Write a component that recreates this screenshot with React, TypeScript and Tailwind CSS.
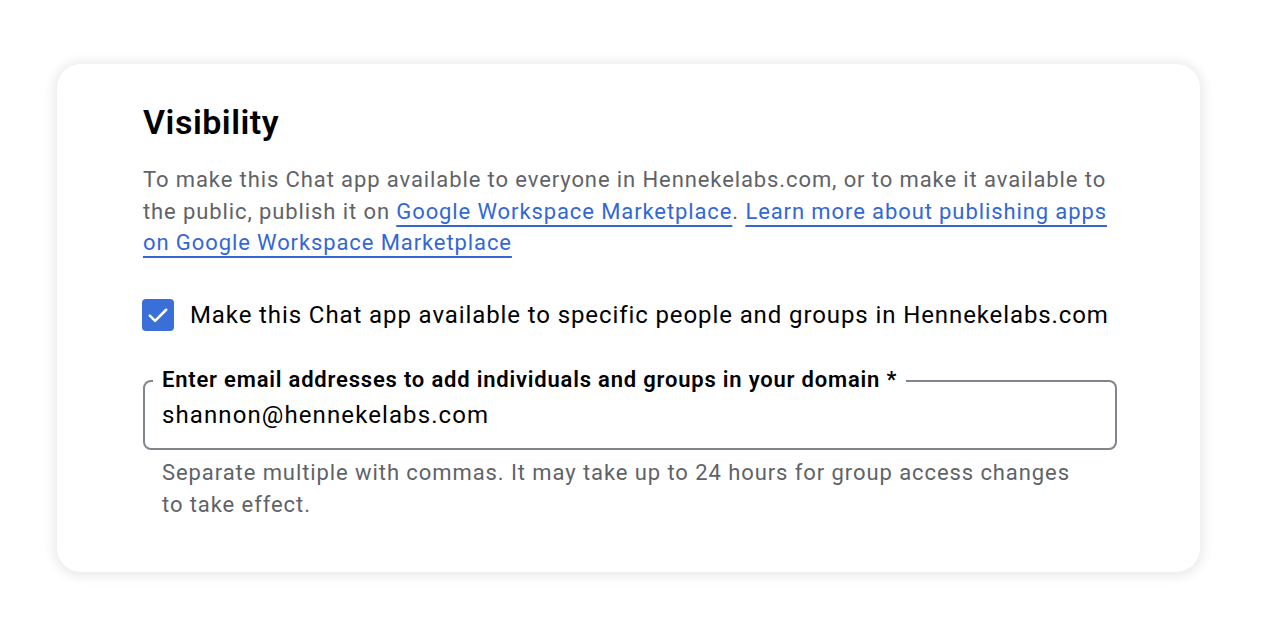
export default function App() {
  return (
    <div className="min-h-[637px] w-full bg-white pl-[57px] pt-[64px] font-['Roboto',sans-serif]">
      <section className="h-[508px] w-[1143px] rounded-[24px] bg-white pl-[86px] pt-[38px] shadow-[0_1px_12px_3px_rgba(0,0,0,0.09)]">
        <div className="w-[974px]">
          <h2 className="text-[34px] font-semibold leading-[40px] tracking-[0.5px] text-black">Visibility</h2>
          <p className="mt-[22px] text-[22px] leading-[31.5px] tracking-[0.9px] text-[#5f6368]">
            To make this Chat app available to everyone in Hennekelabs.com, or to make it available to the public, publish it on{" "}
            <a href="#" className="text-[#3367d6] underline decoration-2 underline-offset-[6px]">
              Google Workspace Marketplace
            </a>
            .{" "}
            <a href="#" className="text-[#3367d6] underline decoration-2 underline-offset-[6px]">
              Learn more about publishing apps on Google Workspace Marketplace
            </a>
          </p>

          <label className="mt-[40px] flex items-center gap-4">
            <span className="-ml-px flex h-8 w-8 shrink-0 items-center justify-center rounded-[4px] bg-[#3b6fd8]">
              <svg viewBox="0 0 24 24" className="h-7 w-7" fill="none" stroke="white" strokeWidth="2.2" strokeLinecap="round" strokeLinejoin="round">
                <path d="M5 12.5l4.5 4.5 9.5-9.5" />
              </svg>
            </span>
            <span className="text-[24px] leading-[32px] tracking-[0.9px] text-black">
              Make this Chat app available to specific people and groups in Hennekelabs.com
            </span>
          </label>

          <div className="relative mt-[49px] flex h-[70px] items-center rounded-[8px] border-2 border-[#80868b] pl-[17px]">
            <span className="absolute -top-[13px] left-[8px] bg-white px-[9px] text-[22px] font-semibold leading-[22px] tracking-[0.8px] text-black">
              Enter email addresses to add individuals and groups in your domain *
            </span>
            <span className="text-[24px] leading-[32px] tracking-[1.1px] text-black">shannon@hennekelabs.com</span>
          </div>

          <p className="mt-[7px] w-[930px] pl-[19px] text-[22px] leading-[32px] tracking-[0.92px] text-[#5f6368]">
            Separate multiple with commas. It may take up to 24 hours for group access changes to take effect.
          </p>
        </div>
      </section>
    </div>
  );
}
